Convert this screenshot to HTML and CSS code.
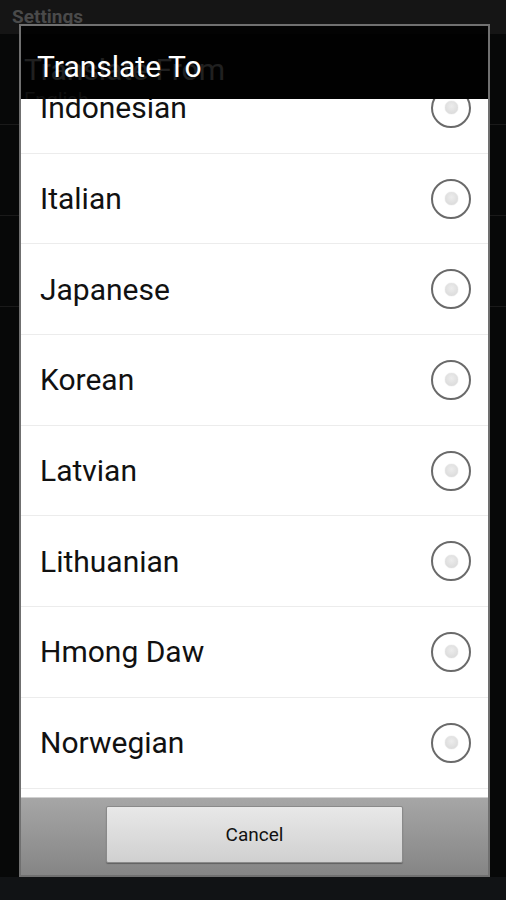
FILE: index.html
```html
<!doctype html>
<html>
  <head>
    <meta charset="utf-8">
    <title>Settings</title>
    <link rel="stylesheet" href="styles.css">
  </head>
  <body>

    <section class="screen">
      <header class="actionbar">Settings</header>
      <ul class="prefs">
        <li class="pref">
          <div class="pref-title">Translate From</div>
          <div class="pref-sum">English</div>
        </li>
        <li class="pref"></li>
        <li class="pref"></li>
      </ul>
    </section>

    <section class="dialog">
      <h1 class="dialog-title">Translate To</h1>
      <div class="choices">
        <ul class="choice-list">
          <li class="choice"><span>Indonesian</span><i class="radio"></i></li>
          <li class="choice"><span>Italian</span><i class="radio"></i></li>
          <li class="choice"><span>Japanese</span><i class="radio"></i></li>
          <li class="choice"><span>Korean</span><i class="radio"></i></li>
          <li class="choice"><span>Latvian</span><i class="radio"></i></li>
          <li class="choice"><span>Lithuanian</span><i class="radio"></i></li>
          <li class="choice"><span>Hmong Daw</span><i class="radio"></i></li>
          <li class="choice"><span>Norwegian</span><i class="radio"></i></li>
          <li class="choice"><span>Persian</span><i class="radio"></i></li>
        </ul>
      </div>
      <div class="buttons">
        <button class="btn">Cancel</button>
      </div>
    </section>

  </body>
</html>
```

FILE: styles.css
```css
* {
  margin: 0;
  padding: 0;
  box-sizing: border-box;
}
html, body {
  width: 506px;
  height: 900px;
  overflow: hidden;
  background: #111315;
  font-family: Roboto, "Noto Sans", Arial, sans-serif;
}
ul {
  list-style: none;
}

/* settings screen behind the dialog */
.screen {
  height: 877px;
  display: flex;
  flex-direction: column;
}
.actionbar {
  height: 34px;
  flex: none;
  padding: 5px 12px 0;
  background: #151515;
  color: #4a4a4a;
  font-size: 19px;
  font-weight: bold;
}
.prefs {
  flex: 1;
  background: #070808;
}
.pref {
  height: 91px;
  border-bottom: 1px solid #1a1a1a;
  padding: 18px 24px 0;
}
.pref-title {
  color: #e0e0e0;
  font-size: 30px;
  line-height: 36px;
}
.pref-sum {
  color: #707070;
  font-size: 20px;
}

/* dialog */
.dialog {
  position: absolute;
  left: 19px;
  top: 24px;
  width: 471px;
  height: 853px;
  border: 2px solid #707070;
  display: flex;
  flex-direction: column;
}
.dialog-title {
  height: 73px;
  flex: none;
  padding: 23px 0 0 16px;
  background: rgba(0, 0, 0, .86);
  color: #fff;
  font-size: 30px;
  font-weight: normal;
  line-height: 36px;
}
.choices {
  flex: 1;
  overflow: hidden;
  background: #fff;
}
.choice-list {
  margin-top: -36px;
}
.choice {
  height: 90.7px;
  display: flex;
  align-items: center;
  justify-content: space-between;
  padding: 0 17px 0 19px;
  border-bottom: 1px solid #ececec;
  color: #111;
  font-size: 30px;
}
.radio {
  width: 40px;
  height: 40px;
  border: 2px solid #6a6a6a;
  border-radius: 50%;
  display: flex;
  align-items: center;
  justify-content: center;
}
.radio::after {
  content: "";
  width: 13px;
  height: 13px;
  border-radius: 50%;
  background: radial-gradient(circle at 50% 40%, #ececec, #d6d6d6);
  box-shadow: 0 0 1px #bbb;
}

.buttons {
  height: 78px;
  flex: none;
  display: flex;
  justify-content: center;
  padding-top: 8px;
  border-top: 1px solid #d0d0d0;
  background: linear-gradient(#a6a6a6, #858585);
}
.btn {
  width: 297px;
  height: 57px;
  border: 1px solid #8a8a8a;
  border-radius: 2px;
  background: linear-gradient(#e8e8e8, #d0d0d0);
  box-shadow: 0 1px 1px rgba(0, 0, 0, .3);
  font-family: Roboto, "Noto Sans", Arial, sans-serif;
  font-size: 19px;
  color: #111;
}
```
